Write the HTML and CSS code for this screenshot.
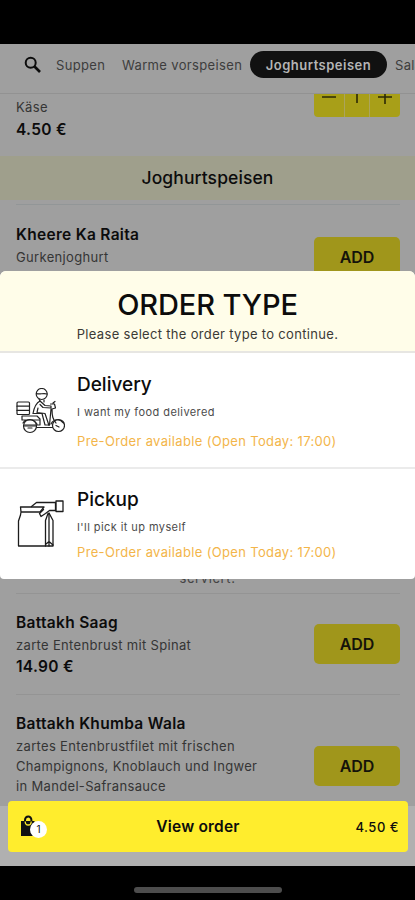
FILE: index.html
```html
<!DOCTYPE html>
<html lang="de">
<head>
<meta charset="utf-8">
<title>Order type</title>
<link rel="stylesheet" href="styles.css">
</head>
<body>
<div class="phone">
  <div class="status"></div>
  <nav class="tabs">
    <svg class="search" viewBox="0 0 18 18"><circle cx="6.7" cy="6.7" r="5" fill="none" stroke="#0c0c0c" stroke-width="2"/><path d="M10.5 10.5L16 16" stroke="#0c0c0c" stroke-width="2.6"/></svg>
    <span class="tab suppen">Suppen</span>
    <span class="tab warme">Warme vorspeisen</span>
    <span class="tab active"><span>Joghurtspeisen</span></span>
    <span class="tab">Salate</span>
  </nav>
  <main class="menu">
    <article class="item first">
      <div class="info"><p class="desc">Käse</p><p class="price">4.50 €</p></div>
      <div class="stepper"><span><svg viewBox="0 0 16 16"><path d="M1 8h14"/></svg></span><span class="count"><svg viewBox="0 0 16 16"><path d="M8 1v13M8 2L5 4"/></svg></span><span><svg viewBox="0 0 16 16"><path d="M1 8h14M8 1v14"/></svg></span></div>
    </article>
    <h2 class="section">Joghurtspeisen</h2>
    <article class="item raita">
      <div class="info"><h3>Kheere Ka Raita</h3><p class="desc">Gurkenjoghurt</p></div>
      <button class="add">ADD</button>
    </article>
    <p class="note">serviert.</p>
    <article class="item saag">
      <div class="info"><h3>Battakh Saag</h3><p class="desc">zarte Entenbrust mit Spinat</p><p class="price">14.90 €</p></div>
      <button class="add">ADD</button>
    </article>
    <article class="item wala">
      <div class="info"><h3>Battakh Khumba Wala</h3><p class="desc">zartes Entenbrustfilet mit frischen<br>Champignons, Knoblauch und Ingwer<br>in Mandel-Safransauce</p></div>
      <button class="add">ADD</button>
    </article>
  </main>
  <footer class="tray">
    <div class="order">
      <div class="bag"><svg viewBox="0 0 18 22"><path d="M1 6h13.500v15H1z" fill="#111"/><path d="M5 9V5a3.200 3.500 0 0 1 6.400 0v4" fill="none" stroke="#111" stroke-width="2"/><path d="M5.200 6.500a3 3.500 0 0 0 6 0" fill="none" stroke="#ffed2d" stroke-width="1.300"/></svg><span class="badge">1</span></div>
      <strong>View order</strong>
      <span class="total">4.50 €</span>
    </div>
  </footer>
  <div class="home"><i></i></div>

  <section class="modal">
    <header><h1>ORDER TYPE</h1><p>Please select the order type to continue.</p></header>
    <div class="choice delivery">
      <svg class="art" viewBox="0 0 49 49" fill="none" stroke="#222" stroke-width="1.2" stroke-linejoin="round" stroke-linecap="round">
        <rect x="1" y="14" width="12.500" height="12.500" rx="1"/><path d="M1 18.200h12.500M1 22.400h12.500"/>
        <circle cx="25.700" cy="6" r="5.500"/><path d="M20.500 5.500c3 1.500 7-1 10.500.5M23 11l1 2M28 12v2"/>
        <path d="M24 13c-4 2-6 7-7 12.500h9l3 11.500M24 13l5 4.500 6 .5v2l-8-.5-3-3M22 20l-1 4.500 8 1 4 12M34.500 16h4l1 4-3.500 1c0 8 1 10 4 14M35 21l-1.500 16h-4.500M37 15l2-1.500"/>
        <path d="M6 28h15l3 3v6H8M6 28v4h12M15 32h8M7 35c2-4 10-5 14 1"/>
        <circle cx="14" cy="38" r="6.500"/>
        <circle cx="42.500" cy="37.500" r="6"/>
        <path d="M7.500 38H20M12 40h4M20.500 39.500h16M35 36c3-6 9-5 12.500-1M40 37.500l3 1.500"/>
      </svg>
      <div class="text"><h2>Delivery</h2><p class="sub">I want my food delivered</p><p class="pre">Pre-Order available (Open Today: 17:00)</p></div>
    </div>
    <div class="choice pickup">
      <svg class="art" viewBox="0 0 49 49" fill="none" stroke="#1c1c1c" stroke-width="1.3" stroke-linejoin="round" stroke-linecap="round">
        <path d="M4.500 8h23.500l-4 5H5zM5 13l-.5 3-2 6v25h34.500V21.500l-4-7.500"/>
        <path d="M15.500 7.500l5-4h19v8h-6l-4 3-4.500 3-1.500-3 4-4"/>
        <path d="M40 2h7v10.500h-7zM32 14.500l-2.500 7V47M33 14.500V47M29.500 45.500l3.500-3 4 3.500"/>
      </svg>
      <div class="text"><h2>Pickup</h2><p class="sub">I'll pick it up myself</p><p class="pre">Pre-Order available (Open Today: 17:00)</p></div>
    </div>
  </section>
</div>
</body>
</html>
```

FILE: styles.css
```css
* { box-sizing: border-box; }
body, h1, h2, h3, p { margin: 0; }
body { font-family: Inter, "Liberation Sans", sans-serif; background: #000; }
.phone { position: relative; width: 415px; height: 900px; overflow: hidden; display: flex; flex-direction: column; background: #9f9f9f; color: #0c0c0c; }
.status { height: 44px; background: #000; flex: none; }
.tabs { height: 50px; flex: none; display: flex; align-items: flex-start; padding: 7px 0 0 24px; border-bottom: 1px solid #929292; white-space: nowrap; overflow: hidden; font-size: 13px; color: #3d3d3d; }
.search { width: 18px; height: 18px; margin: 5px 14px 0 0; flex: none; }
.tab { line-height: 28px; letter-spacing: 0.35px; flex: none; }
.suppen { width: 66px; }
.warme { width: 128px; }
.active { width: 137px; height: 27px; line-height: 28px; border-radius: 14px; background: #111; color: #b5b5b5; font-weight: 600; letter-spacing: 0.5px; text-align: center; margin-right: 8px; }
.menu { height: 712px; flex: none; overflow: hidden; }
.item { display: flex; justify-content: space-between; padding: 0 15px 0 16px; }
.desc { font-size: 13px; line-height: 20px; letter-spacing: 0.33px; color: #353535; }
.price { font-size: 15.5px; font-weight: 600; line-height: 24px; letter-spacing: 0.3px; }
h3 { font-size: 15.5px; font-weight: 600; line-height: 24px; letter-spacing: 0.3px; }
.first { height: 62px; padding-top: 3px; }
.first .price { line-height: 25px; }
.stepper { width: 86px; height: 23px; margin-top: -3px; display: grid; grid-template-columns: 30px 26px 30px; border-radius: 0 0 4px 4px; overflow: hidden; background: #a89f18; }
.stepper span { text-align: center; height: 23px; }
.stepper .count { border: solid #aba45c; border-width: 0 1px; }
.stepper svg { display: block; width: 16px; height: 16px; margin: -5px auto 0; fill: none; stroke: #2b2906; stroke-width: 1.6; }
.section { height: 44px; background: #9f9f8c; font-size: 17.5px; font-weight: 500; line-height: 43px; text-align: center; letter-spacing: 0.1px; }
.raita { margin: 4px 15px 0 16px; padding: 18px 0 0; border-top: 1px solid #929697; height: 120px; }
.add { font: 600 16px/40px Inter, sans-serif; width: 86px; height: 40px; border: 0; border-radius: 5px; padding: 0; background: #a0961b; color: #14130a; }
.raita .add { margin-top: 14px; }
.note { margin-top: 254px; height: 15px; text-align: center; font-size: 13px; line-height: 0; letter-spacing: 0.6px; color: #444; }
.saag, .wala { margin: 0 15px 0 16px; padding: 17px 0 0; border-top: 1px solid #949494; }
.saag { height: 101px; }
.saag .add { margin-top: 13px; }
.wala .add { margin-top: 34px; }
.tray { height: 60px; flex: none; background: #b0b0b0; padding: 0 7px 0 8px; }
.order { position: relative; height: 51px; margin-top: -5px; border-radius: 4px; background: #ffed2d; display: grid; grid-template-columns: 90px 200px 1fr; align-items: center; }
.order strong { font-size: 15.5px; font-weight: 600; text-align: center; letter-spacing: 0.2px; }
.total { text-align: right; padding-right: 9px; font-size: 13px; font-weight: 500; letter-spacing: 0.5px; }
.bag { position: relative; height: 22px; padding-left: 12px; }
.bag svg { width: 18px; height: 22px; display: block; margin-top: -1px; }
.badge { position: absolute; left: 22px; top: 5px; width: 17px; height: 17px; border-radius: 50%; background: #fff; font-size: 10px; line-height: 17px; text-align: center; }
.home { height: 34px; flex: none; background: #000; padding-top: 21px; }
.home i { display: block; width: 148px; height: 6px; border-radius: 3px; background: #4d4d4d; margin-left: 134px; }
.modal { position: absolute; left: 0; top: 271px; width: 415px; height: 308px; background: #fff; border-radius: 6px 6px 4px 4px; overflow: hidden; }
.modal header { height: 82px; background: #fffde9; border-bottom: 2px solid #e7e6e2; text-align: center; padding-top: 16px; }
h1 { font-size: 29px; line-height: 36px; font-weight: 500; letter-spacing: -0.1px; }
header p { font-size: 13px; line-height: 22px; letter-spacing: 0.32px; color: #3b3a35; }
.choice { display: flex; padding: 0 16px; }
.delivery { height: 116px; border-bottom: 2px solid #ebebeb; padding-top: 18px; }
.pickup { padding-top: 17px; }
.art { width: 49px; height: 49px; margin: 17px 12px 0 0; flex: none; }
.pickup .art { margin-top: 13px; }
.choice h2 { font-size: 19px; font-weight: 500; line-height: 28px; }
.sub { font-size: 11px; line-height: 27px; letter-spacing: 0.42px; color: #4b4b4b; }
.pre { font-size: 13px; letter-spacing: 0.34px; color: #f3b54a; }
.delivery .pre { line-height: 30px; }
.pickup .pre { line-height: 22px; }
```
